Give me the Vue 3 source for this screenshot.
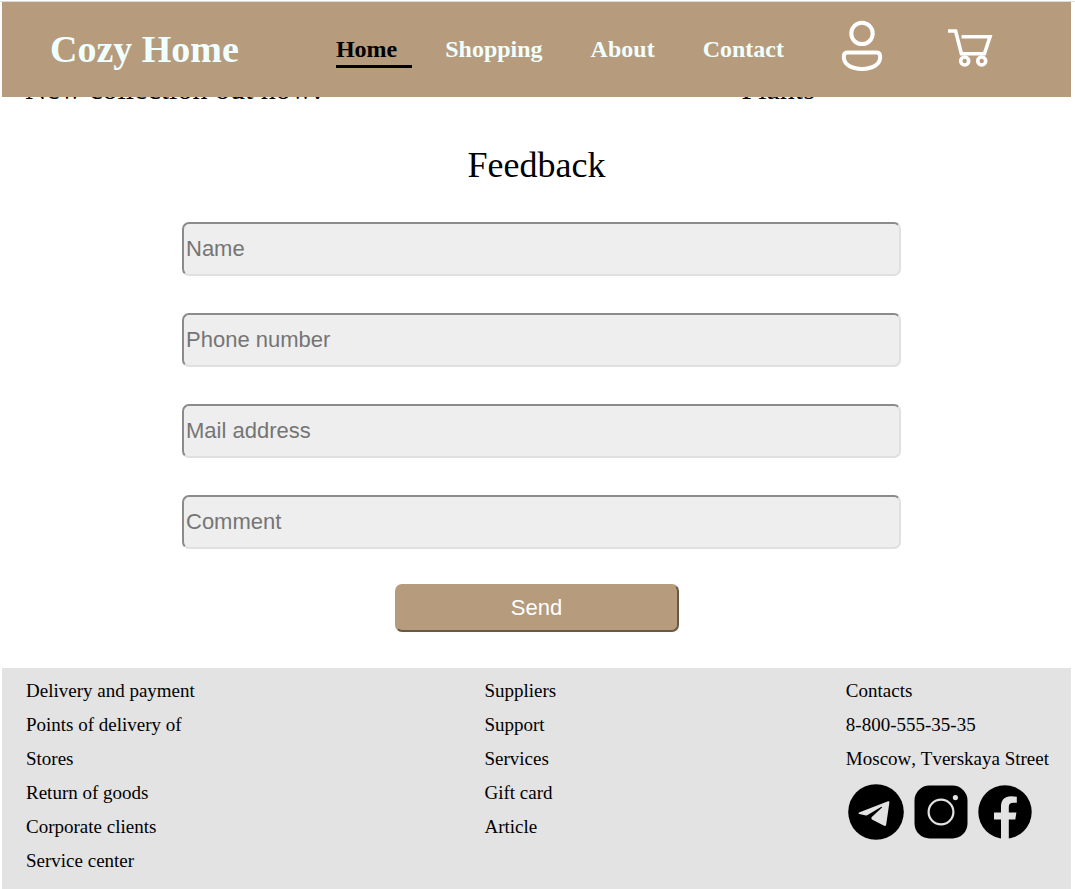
<script setup>
import { ref } from 'vue'

const nav = ['Home', 'Shopping', 'About', 'Contact']
const current = ref('Home')

const fields = [
  { id: 'name', label: 'Name', type: 'text' },
  { id: 'phone', label: 'Phone number', type: 'tel' },
  { id: 'mail', label: 'Mail address', type: 'email' },
  { id: 'comment', label: 'Comment', type: 'text' },
]

const columns = [
  ['Delivery and payment', 'Points of delivery of', 'Stores', 'Return of goods', 'Corporate clients', 'Service center'],
  ['Suppliers', 'Support', 'Services', 'Gift card', 'Article'],
]
</script>

<template>
  <div class="page">
    <header class="header">
      <a class="logo" href="#">Cozy Home</a>
      <nav class="nav">
        <a
          v-for="item in nav"
          :key="item"
          href="#"
          :class="{ active: item === current }"
          @click.prevent="current = item"
        >{{ item }}</a>
      </nav>
      <div class="actions">
        <a href="#" aria-label="Account">
          <svg width="42" height="52" viewBox="0 0 42 52" fill="none" stroke="#fff" stroke-width="4">
            <circle cx="21" cy="13.4" r="10.7" />
            <path d="M6 32.4H36Q39.2 32.4 39.2 37C39.2 44.5 31.5 48.9 21 48.9S2.8 44.5 2.8 37Q2.8 32.4 6 32.4Z" />
          </svg>
        </a>
        <a href="#" aria-label="Cart">
          <svg width="46" height="44" viewBox="0 -4 46 44" fill="none" stroke="#fff" stroke-width="3.6">
            <path d="M1 3H8.6L14.4 25.8H37.4L43 8.8H14.6" />
            <circle cx="17.7" cy="33" r="4" />
            <circle cx="34.7" cy="33" r="4" />
          </svg>
        </a>
      </div>
    </header>

    <main>
      <section class="teasers">
        <p>New collection out now!</p>
        <p>Plants</p>
      </section>

      <h1 class="title">Feedback</h1>
      <form @submit.prevent>
        <div class="fields">
          <input
            v-for="f in fields"
            :id="f.id"
            :key="f.id"
            class="field"
            :type="f.type"
            :name="f.id"
            :placeholder="f.label"
            :aria-label="f.label"
          />
        </div>
        <button class="submit" type="submit">Send</button>
      </form>
    </main>

    <footer class="footer">
      <ul v-for="(column, i) in columns" :key="i">
        <li v-for="item in column" :key="item"><a href="#">{{ item }}</a></li>
      </ul>
      <div>
        <ul>
          <li>Contacts</li>
          <li><a href="tel:88005553535">8-800-555-35-35</a></li>
          <li>Moscow, Tverskaya Street</li>
        </ul>
        <div class="social">
          <a href="#" aria-label="Telegram">
            <svg width="56" height="56" viewBox="0 0 56 56">
              <circle cx="28" cy="28" r="27.8" />
              <path fill="#e3e3e3" d="M11 28.4L40 17.2Q41.6 16.8 41.4 18.6L38.2 40.4Q37.8 42.8 35.6 41.5L24 35.4Q22.6 34.4 23.8 33.1L34 23.4Q34.2 22.4 33 22.9L19.6 31Q18.4 31.7 17 31.2L11.2 30Q9.6 29.2 11 28.4Z" />
            </svg>
          </a>
          <a href="#" aria-label="Instagram">
            <svg width="54" height="54" viewBox="0 0 54 54">
              <rect x="0.5" y="0.5" width="53" height="53" rx="15" />
              <circle cx="27" cy="27" r="12.4" fill="none" stroke="#e3e3e3" stroke-width="2.2" />
              <circle cx="41.4" cy="12.6" r="2.6" fill="#e3e3e3" />
            </svg>
          </a>
          <a href="#" aria-label="Facebook">
            <svg width="54" height="54" viewBox="0 0 54 54">
              <circle cx="27" cy="27" r="26.7" />
              <path fill="#e3e3e3" d="M23 54V34.4H16V27.4H23V21.5C23 14.6 27 11.2 33 11.2Q36 11.2 38.8 11.8V17.8H35.4Q30.8 17.8 30.8 22V27.4H38.4L37.3 34.4H30.8V54Z" />
            </svg>
          </a>
        </div>
      </div>
    </footer>
  </div>
</template>

<style>
body {
  background: #fff;
}
</style>

<style scoped>
.page {
  margin-top: 1px;
  border-top: 1px solid #dcdcdc;
  padding: 0 4px 0 2px;
  font-family: "Liberation Serif", "Times New Roman", serif;
  color: #000;
}

a {
  color: inherit;
  text-decoration: none;
}

svg {
  display: block;
}

.header {
  position: sticky;
  top: 0;
  z-index: 1;
  box-sizing: border-box;
  height: 95px;
  padding: 0 78px 2px 48px;
  display: flex;
  align-items: center;
  background: #b69b7d;
  color: azure;
  font-weight: bold;
}

.logo {
  margin-right: 97px;
  font-size: 38px;
  line-height: 44px;
  white-space: nowrap;
}

.nav {
  display: flex;
  gap: 33px;
  font-size: 24px;
  line-height: 28px;
}

.nav a {
  padding: 5px 15px 2px 0;
  border-bottom: 3px solid transparent;
}

.nav .active {
  color: #000;
  border-color: #000;
}

.actions {
  margin-left: auto;
  display: flex;
  align-items: center;
  gap: 64px;
  padding-bottom: 6px;
}

.teasers {
  display: grid;
  grid-template-columns: 137fr 63fr;
  margin-top: -25px;
  padding-left: 23px;
  font-size: 30px;
  line-height: 34px;
}

.teasers p {
  margin: 0;
}

.title {
  margin: 38px 0 36px;
  font-size: 36px;
  line-height: 42px;
  font-weight: normal;
  text-align: center;
}

.fields {
  display: grid;
  gap: 37px;
  padding: 0 170px 0 180px;
}

.field {
  box-sizing: border-box;
  width: 100%;
  height: 54px;
  padding: 1px 2px;
  border: 2px solid;
  border-color: #8b8b8b #e0e0e0 #e0e0e0 #8b8b8b;
  border-radius: 7px;
  background: #eee;
  font: 22px "Liberation Sans", Arial, sans-serif;
}

.field::placeholder {
  color: #757575;
}

.submit {
  display: block;
  width: 284px;
  height: 48px;
  margin: 35px auto 36px;
  padding: 0;
  border: 2px solid;
  border-color: #b69b7d #6a5844 #6a5844 #b69b7d;
  border-radius: 7px;
  background: #b69b7d;
  color: #fff;
  font: 22px "Liberation Sans", Arial, sans-serif;
}

.footer {
  display: flex;
  justify-content: space-between;
  padding: 6px 22px 11px 24px;
  background: #e3e3e3;
  font-size: 19px;
  font-kerning: none;
  line-height: 34px;
}

.footer ul {
  margin: 0;
  padding: 0;
  list-style: none;
}

.social {
  display: flex;
  align-items: center;
  gap: 10px;
  padding: 8px 0 0 2px;
}
</style>
